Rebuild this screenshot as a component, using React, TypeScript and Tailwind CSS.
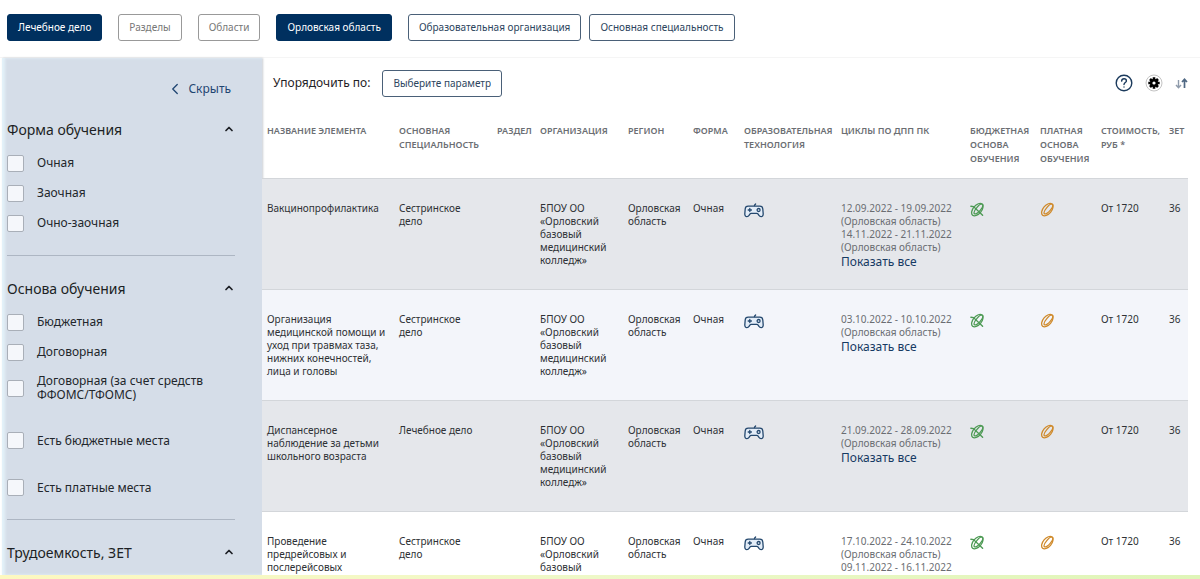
import React, { useState } from "react";
import { ChevronLeft, ChevronUp } from "lucide-react";

type FilterOption = {
  id: string;
  label: string;
};

type Course = {
  id: number;
  name: string;
  speciality: string;
  cycles: string[];
  background: string;
};

const formOptions: FilterOption[] = [
  { id: "full-time", label: "Очная" },
  { id: "extramural", label: "Заочная" },
  { id: "mixed", label: "Очно-заочная" },
];

const basisOptions: FilterOption[] = [
  { id: "budget", label: "Бюджетная" },
  { id: "contract", label: "Договорная" },
];

const placeOptions: FilterOption[] = [
  { id: "has-budget", label: "Есть бюджетные места" },
  { id: "has-paid", label: "Есть платные места" },
];

const columns = [
  { title: "Название элемента", width: "w-[132px]" },
  { title: "Основная специальность", width: "w-[98px]" },
  { title: "Раздел", width: "w-[43px]" },
  { title: "Организация", width: "w-[88px]" },
  { title: "Регион", width: "w-[65px]" },
  { title: "Форма", width: "w-[51px]" },
  { title: "Образовательная технология", width: "w-[97px]" },
  { title: "Циклы по ДПП ПК", width: "w-[129px]" },
  { title: "Бюджетная основа обучения", width: "w-[70px]" },
  { title: "Платная основа обучения", width: "w-[61px]" },
  { title: "Стоимость, руб *", width: "w-[68px]" },
  { title: "ЗЕТ", width: "w-[24px]" },
];

const courses: Course[] = [
  {
    id: 1,
    name: "Вакцинопрофилактика",
    speciality: "Сестринское дело",
    cycles: ["12.09.2022 - 19.09.2022", "14.11.2022 - 21.11.2022"],
    background: "bg-[#e5e7eb]",
  },
  {
    id: 2,
    name: "Организация медицинской помощи и уход при травмах таза, нижних конечностей, лица и головы",
    speciality: "Сестринское дело",
    cycles: ["03.10.2022 - 10.10.2022"],
    background: "bg-[#f3f5fa]",
  },
  {
    id: 3,
    name: "Диспансерное наблюдение за детьми школьного возраста",
    speciality: "Лечебное дело",
    cycles: ["21.09.2022 - 28.09.2022"],
    background: "bg-[#e5e7eb]",
  },
  {
    id: 4,
    name: "Проведение предрейсовых и послерейсовых",
    speciality: "Сестринское дело",
    cycles: ["17.10.2022 - 24.10.2022", "09.11.2022 - 16.11.2022"],
    background: "bg-white",
  },
];

const chip = "h-[27px] rounded-[3px] border px-2.5 text-[10px] whitespace-nowrap cursor-pointer";

const GamepadIcon = () => (
  <svg width="20" height="15" viewBox="0 0 20 15" fill="none" stroke="#24486e" strokeWidth="1.3" strokeLinecap="round" strokeLinejoin="round">
    <path d="M10.5 3.200V2.200L11.600 1" />
    <path d="M4.200 3.200h11.600c1.700 0 2.900 1.200 3 2.800l.4 4.800c.1 1.700-.8 2.800-2.100 2.800-1 0-1.700-.4-2.200-1.300l-.7-1.100c-.4-.7-.8-.9-1.500-.9H7.300c-.7 0-1.100.2-1.500.9l-.7 1.100c-.5.900-1.200 1.300-2.200 1.300-1.300 0-2.200-1.100-2.100-2.800L1.200 6c.1-1.600 1.300-2.800 3-2.800z" fill="#e3edf8" />
    <path d="M4.200 7h3.200M5.800 5.400v3.200" />
    <circle cx="14.600" cy="7" r="1.500" />
  </svg>
);

const CoinIcon = ({ crossed = false }: { crossed?: boolean }) => (
  <svg width="15" height="15" viewBox="0 0 15 15" fill="none" stroke={crossed ? "#4d9a54" : "#cf8a2b"} strokeWidth="1.3" strokeLinecap="round">
    <ellipse cx="7.3" cy="7.6" rx="4.2" ry="7.3" transform="rotate(40 7.3 7.6)" />
    <ellipse cx="8.5" cy="7" rx="2.2" ry="6.200" transform="rotate(40 8.5 7)" />
    {crossed && <path d="M.9 4.300l2.600.3 9.100 8.600" strokeWidth="1.400" />}
  </svg>
);

const HelpIcon = () => (
  <svg width="18" height="18" viewBox="0 0 18 18" fill="none" stroke="#1b3a5c" strokeWidth="1.400" strokeLinecap="round">
    <circle cx="9" cy="9" r="7.800" />
    <path d="M6.600 7.100C6.700 5.600 7.700 4.800 9 4.800s2.400.8 2.400 2.100c0 1.600-2.400 1.800-2.400 3.700" />
    <path d="M9 13v.1" />
  </svg>
);

const GearIcon = () => (
  <svg width="18" height="18" viewBox="0 0 18 18">
    <circle cx="9" cy="9" r="8" fill="#fff" stroke="#c4c4c4" />
    <g stroke="#000" strokeWidth="2.600">
      <path d="M9 3.300v11.400M3.300 9h11.400M5 5l8 8M13 5l-8 8" />
    </g>
    <circle cx="9" cy="9" r="4" fill="#000" />
    <circle cx="9" cy="9" r="1.600" fill="#fff" />
  </svg>
);

const SortIcon = () => (
  <svg width="13" height="11" viewBox="0 0 13 11" fill="none" strokeWidth="1.400">
    <path d="M3.500 2v7.500M1 7l2.500 2.700L6 7" stroke="#8f9bab" />
    <path d="M9.500 10V1.500M7 4l2.500-2.700L12 4" stroke="#4f6883" strokeWidth="1.700" />
  </svg>
);

const SectionTitle = ({ title, open, onClick }: { title: string; open: boolean; onClick: () => void }) => (
  <button
    type="button"
    aria-expanded={open}
    onClick={onClick}
    className="flex h-6 w-full items-center justify-between text-[14px] text-[#1c1f24] cursor-pointer"
  >
    {title}
    <ChevronUp size={12} strokeWidth={3.5} className={open ? "" : "rotate-180"} />
  </button>
);

const FilterCheckbox = ({ option, className }: { option: FilterOption; className: string }) => {
  const [checked, setChecked] = useState(false);

  return (
    <div className={`flex items-center gap-[13px] ${className}`}>
      <input
        id={option.id}
        type="checkbox"
        checked={checked}
        onChange={() => setChecked(!checked)}
        className="size-[17px] shrink-0 appearance-none rounded-[2px] border border-[#a9afb8] bg-[#f5f7fb] checked:bg-[#00305f]"
      />
      <label htmlFor={option.id} className="text-[12px] leading-[14px] text-[#22262b]">
        {option.label}
      </label>
    </div>
  );
};

const Sidebar = () => {
  const [formOpen, setFormOpen] = useState(true);
  const [basisOpen, setBasisOpen] = useState(true);
  const [hoursOpen, setHoursOpen] = useState(true);

  return (
    <aside className="ml-0.5 w-[260px] shrink-0 bg-[#d5dde8] pt-5 pr-[27px] pl-[5px] shadow-[inset_3px_0_3px_#e4f2f9,1px_0_2px_#c9cdd3]">
      <div className="flex justify-end pr-1">
        <button type="button" className="flex h-[22px] items-center gap-1 text-[12px] text-[#1f4571] cursor-pointer">
          <ChevronLeft size={18} strokeWidth={1.75} />
          Скрыть
        </button>
      </div>

      <div className="mt-[17px] border-b border-[#adb6c3] pb-[17px]">
        <SectionTitle title="Форма обучения" open={formOpen} onClick={() => setFormOpen(!formOpen)} />
        {formOpen && (
          <div className="mt-[7px]">
            {formOptions.map((option) => (
              <FilterCheckbox key={option.id} option={option} className="h-[30px]" />
            ))}
          </div>
        )}
      </div>

      <div className="mt-5 border-b border-[#adb6c3] pb-2">
        <SectionTitle title="Основа обучения" open={basisOpen} onClick={() => setBasisOpen(!basisOpen)} />
        {basisOpen && (
          <div className="mt-[7px]">
            {basisOptions.map((option) => (
              <FilterCheckbox key={option.id} option={option} className="h-[30px]" />
            ))}
            <FilterCheckbox
              option={{ id: "contract-foms", label: "Договорная (за счет средств ФФОМС/ТФОМС)" }}
              className="mb-2 h-[42px]"
            />
            {placeOptions.map((option) => (
              <FilterCheckbox key={option.id} option={option} className="h-[47px]" />
            ))}
          </div>
        )}
      </div>

      <div className="mt-5">
        <SectionTitle title="Трудоемкость, ЗЕТ" open={hoursOpen} onClick={() => setHoursOpen(!hoursOpen)} />
      </div>
    </aside>
  );
};

const CourseRow = ({ course }: { course: Course }) => (
  <tr className={`h-[111px] border-t border-[#d3d6da] align-top ${course.background}`}>
    <td className="pt-[23px] pl-[5px]">{course.name}</td>
    <td className="pt-[23px] pr-3 pl-[5px]">{course.speciality}</td>
    <td></td>
    <td className="pt-[23px] pl-[5px]">БПОУ ОО «Орловский базовый медицинский колледж»</td>
    <td className="pt-[23px] pl-[5px]">Орловская область</td>
    <td className="pt-[23px] pl-[5px]">Очная</td>
    <td className="pt-6 pl-[5px]">
      <GamepadIcon />
    </td>
    <td className="pt-[23px] pl-[5px] text-[#6a6d72]">
      {course.cycles.map((cycle) => (
        <p key={cycle}>
          {cycle}
          <br />
          (Орловская область)
        </p>
      ))}
      <a href="#" className="text-[12px] leading-4 text-[#163a63]">
        Показать все
      </a>
    </td>
    <td className="pt-[23px] pl-[5px]">
      <CoinIcon crossed />
    </td>
    <td className="pt-[23px] pl-[5px]">
      <CoinIcon />
    </td>
    <td className="pt-[23px] pl-[5px]">От 1720</td>
    <td className="pt-[23px] pl-[5px]">36</td>
  </tr>
);

export default function App() {
  return (
    <div className="flex h-screen flex-col overflow-hidden bg-white font-['Noto_Sans',sans-serif]">
      <header className="flex shrink-0 gap-4 border-b border-[#f5f5f5] px-[7px] pt-3.5 pb-4">
        <button type="button" className={`${chip} border-[#00305f] bg-[#00305f] text-white`}>Лечебное дело</button>
        <button type="button" className={`${chip} border-[#999] text-[#777]`}>Разделы</button>
        <button type="button" className={`${chip} border-[#999] text-[#777]`}>Области</button>
        <button type="button" className={`${chip} border-[#00305f] bg-[#00305f] text-white`}>Орловская область</button>
        <div className="flex gap-2">
          <button type="button" className={`${chip} border-[#4a6078] text-[#2d455e]`}>Образовательная организация</button>
          <button type="button" className={`${chip} border-[#4a6078] text-[#2d455e]`}>Основная специальность</button>
        </div>
      </header>

      <div className="flex min-h-0 flex-1">
        <Sidebar />

        <main className="min-w-0 flex-1 overflow-hidden pr-3">
          <div className="flex h-[50px] items-center pl-[11px]">
            <label htmlFor="sort-by" className="text-[12px] text-[#1f2226]">Упорядочить по:</label>
            <select id="sort-by" className={`${chip} ml-3 appearance-none border-[#4a6078] bg-white text-[#2d455e]`}>
              <option>Выберите параметр</option>
            </select>
            <div className="ml-auto flex items-center gap-3">
              <button type="button" aria-label="Помощь" className="cursor-pointer"><HelpIcon /></button>
              <button type="button" aria-label="Настройки" className="cursor-pointer"><GearIcon /></button>
              <button type="button" aria-label="Сортировка" className="cursor-pointer"><SortIcon /></button>
            </div>
          </div>

          <table className="w-full table-fixed border-collapse text-[10px] leading-[13px] text-[#2e3135]">
            <thead>
              <tr className="h-[70px] align-top">
                {columns.map((column) => (
                  <th
                    key={column.title}
                    scope="col"
                    className={`${column.width} pt-4 pl-[5px] text-left text-[9px] leading-[14px] font-semibold text-[#6b6e73] uppercase`}
                  >
                    {column.title}
                  </th>
                ))}
              </tr>
            </thead>
            <tbody>
              {courses.map((course) => (
                <CourseRow key={course.id} course={course} />
              ))}
            </tbody>
          </table>
        </main>
      </div>

      <footer className="h-1 shrink-0 bg-linear-to-r from-[#fdf8c0] via-[#eef8c8] to-[#dff5b8]"></footer>
    </div>
  );
}
